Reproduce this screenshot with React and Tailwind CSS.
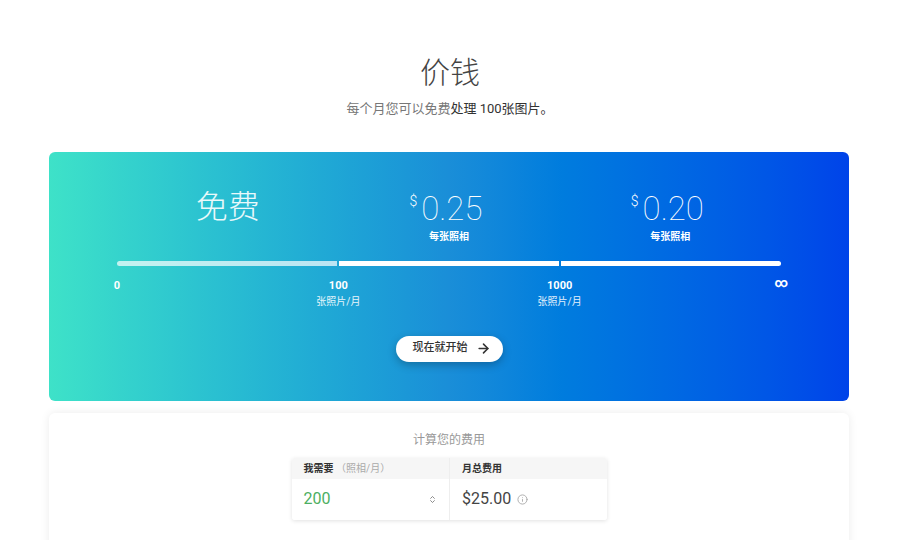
import { ArrowRight, ChevronsUpDown, Info } from 'lucide-react'

const TIERS = [
  { price: null, label: '免费' },
  { price: '0.25', label: '每张照相' },
  { price: '0.20', label: '每张照相' },
]

const MARKS = [
  { value: '0' },
  { value: '100', unit: '张照片/月' },
  { value: '1000', unit: '张照片/月' },
  { value: '∞' },
]

const FONT = "font-['Roboto','Noto_Sans_CJK_SC',sans-serif]"

export default function App() {
  return (
    <div className={`w-[900px] h-[540px] overflow-hidden bg-white ${FONT}`}>
      <div className="pt-[55px] text-center">
        <h1 className="text-[30px] leading-[36px] font-light text-[#444]">价钱</h1>
        <p className="mt-[8px] text-[13px] text-[#777]">
          每个月您可以免费<span className="text-[#333]">处理 100张图片。</span>
        </p>
      </div>

      {/* Pricing tiers */}
      <div className="ml-[49px] mt-[33px] w-[800px] h-[249px] rounded-[6px] bg-gradient-to-r from-[#3ee2c8] via-[#1a8ed8] to-[#0043e9] px-[68px] pt-[35px] text-white">
        <div className="grid grid-cols-3 h-[68px]">
          {TIERS.map((t, i) => (
            <div key={i} className="flex flex-col items-center">
              {t.price ? (
                <>
                  <div className="flex items-start mt-[4px] -ml-[6px]">
                    <span className="text-[14px] leading-[14px] mt-[3px] mr-[4px] font-light">$</span>
                    <span className="text-[33px] leading-[36px] font-thin">{t.price}</span>
                  </div>
                  <div className="mt-[3px] text-[10px] font-bold leading-[14px]">{t.label}</div>
                </>
              ) : (
                <div className="text-[32px] leading-[40px] font-light text-white/90">{t.label}</div>
              )}
            </div>
          ))}
        </div>

        <div className="mt-[6px] flex gap-[2px] h-[5px]">
          <div className="flex-1 rounded-l-full bg-white/70" />
          <div className="flex-1 bg-white" />
          <div className="flex-1 rounded-r-full bg-white" />
        </div>

        <div className="mt-[13px] flex justify-between h-[30px]">
          {MARKS.map((m, i) => (
            <div key={i} className="w-0 flex flex-col items-center">
              <span className={`whitespace-nowrap font-bold ${m.value === '∞' ? 'text-[13px] leading-[11px] -mt-[2px]' : 'text-[11px] leading-[14px]'}`}>
                {m.value}
              </span>
              {m.unit && (
                <span className="mt-[2px] whitespace-nowrap text-[10px] leading-[14px] text-white/90">{m.unit}</span>
              )}
            </div>
          ))}
        </div>

        <div className="mt-[27px] flex justify-center">
          <button className="flex items-center gap-[8px] h-[26px] rounded-full bg-white pl-[17px] pr-[12px] text-[11px] font-medium text-[#333] shadow-[0_3px_8px_rgba(0,0,0,0.25)]">
            现在就开始
            <ArrowRight size={15} strokeWidth={2.5} />
          </button>
        </div>
      </div>

      {/* Calculator */}
      <div className="ml-[49px] mt-[12px] w-[800px] h-[200px] rounded-[6px] bg-white shadow-[0_0_10px_rgba(0,0,0,0.08)] pt-[18px]">
        <div className="text-center text-[12px] text-[#999]">计算您的费用</div>
        <div className="mx-auto mt-[9px] w-[315px] rounded-[3px] shadow-[0_1px_4px_rgba(0,0,0,0.12)] overflow-hidden">
          <div className="grid grid-cols-2 bg-[#f6f6f6] h-[21px] text-[10px] leading-[21px]">
            <div className="px-[12px] font-bold text-[#333]">
              我需要 <span className="font-normal text-[#aaa]">（照相/月）</span>
            </div>
            <div className="px-[12px] border-l border-[#eee] font-bold text-[#333]">月总费用</div>
          </div>
          <div className="grid grid-cols-2 h-[41px] bg-white">
            <div className="flex items-center justify-between px-[12px]">
              <span className="text-[16px] text-[#4caf62]">200</span>
              <ChevronsUpDown size={9} className="text-[#666]" />
            </div>
            <div className="flex items-center gap-[6px] px-[12px] border-l border-[#eee]">
              <span className="text-[16px] text-[#444]">$25.00</span>
              <Info size={11} className="text-[#aaa]" />
            </div>
          </div>
        </div>
      </div>
    </div>
  )
}
